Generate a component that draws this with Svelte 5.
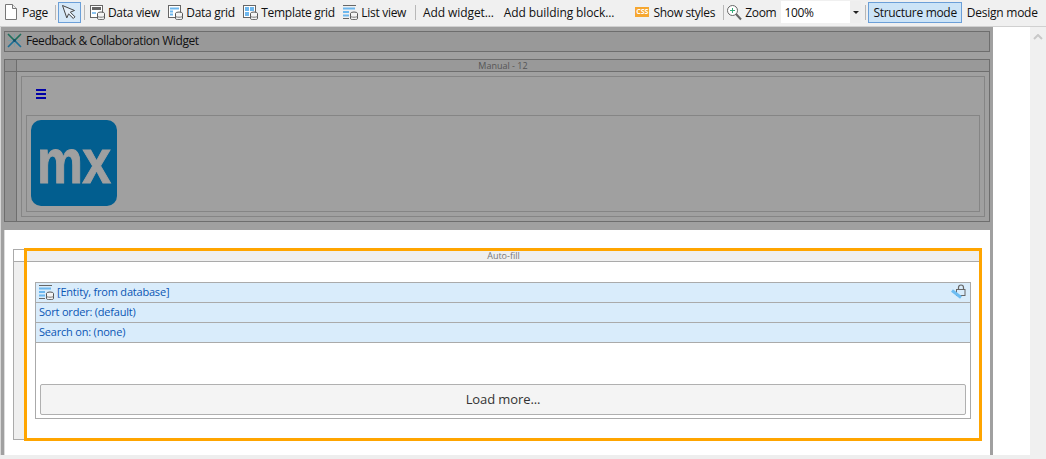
<script lang="ts">
  const gridTools = [
    { label: 'Data view', icon: 'view' },
    { label: 'Data grid', icon: 'grid' },
    { label: 'Template grid', icon: 'template' },
    { label: 'List view', icon: 'list' }
  ]
  const dsRows = ['Sort order: (default)', 'Search on: (none)']
</script>

{#snippet db()}
  <ellipse cx="12" cy="9.5" rx="3.5" ry="1.5" fill="#f4f4f4" stroke="#555" />
  <path d="M8.5 9.5v5c0 .8 1.500 1.200 3.500 1.200s3.500-.4 3.500-1.200v-5" fill="#f4f4f4" stroke="#555" />
  <path d="M8.5 12c0 .8 1.500 1.200 3.500 1.200s3.500-.4 3.500-1.200" fill="none" stroke="#777" />
{/snippet}

<div class="app">
  <header class="toolbar">
    <div class="tool page">
      <svg width="16" height="18" viewBox="0 0 16 18"><path d="M2.500 1.500h7l4 4v11h-11z" fill="#fff" stroke="#777" /><path d="M9.500 1.500v4h4" fill="#eee" stroke="#777" /></svg>
      <span>Page</span>
    </div>
    <i class="sep"></i>
    <div class="select-btn">
      <svg width="18" height="18" viewBox="0 0 18 18"><path d="M2.500 2.500l12 5-4.200 1.700 4.700 4.600-1.700 1.700-4.700-4.600-1.800 4z" fill="#e4eef8" stroke="#444" stroke-linejoin="round" /></svg>
    </div>
    <i class="sep"></i>
    <div class="grid-tools">
      {#each gridTools as t}
        <div class="tool">
          <svg width="16" height="16" viewBox="0 0 16 16">
            {#if t.icon === 'view'}
              <rect x="1.500" y="1.500" width="12" height="12" fill="#fff" stroke="#666" />
              <rect x="3" y="3" width="9" height="3" fill="#666" />
              <rect x="3" y="8" width="4" height="2" fill="#8cc4f0" />
            {:else if t.icon === 'grid'}
              <rect x="1.500" y="1.500" width="12" height="12" fill="#fff" stroke="#666" />
              <path d="M3 4.500h9M3 7.500h3M3 10.500h3" stroke="#6db7ee" stroke-width="2" />
            {:else if t.icon === 'template'}
              <rect x="1.500" y="1.500" width="12" height="12" fill="#fff" stroke="#666" />
              <rect x="3" y="3" width="4" height="4" fill="#6db7ee" />
              <rect x="8" y="3" width="4" height="4" fill="#6db7ee" />
              <rect x="3" y="8" width="4" height="4" fill="#6db7ee" />
            {:else}
              <path d="M1 1.500h13M1 14.500h6" stroke="#666" />
              <path d="M1 4.500h12M1 8h6M1 11.500h6" stroke="#6db7ee" stroke-width="2" />
            {/if}
            {@render db()}
          </svg>
          <span>{t.label}</span>
        </div>
      {/each}
    </div>
    <i class="sep"></i>
    <div class="tool add">Add widget...</div>
    <div class="tool add">Add building block...</div>
    <div class="tool styles">
      <span class="css">CSS</span>
      <span>Show styles</span>
    </div>
    <i class="sep"></i>
    <div class="tool zoom">
      <svg width="16" height="17" viewBox="0 0 16 17"><circle cx="6.500" cy="6.500" r="5" fill="#fff" stroke="#666" /><path d="M10 10l5 5.500" stroke="#666" stroke-width="2" /><path d="M4 6.500h5M6.500 4v5" stroke="#3a7" /></svg>
      <span>Zoom</span>
    </div>
    <div class="combo"><span>100%</span><b><i></i></b></div>
    <i class="sep"></i>
    <div class="mode on">Structure mode</div>
    <div class="mode">Design mode</div>
  </header>

  <div class="main">
    <div class="work">
      <div class="row">
        <div class="canvas">
          <section class="shaded">
            <div class="widget">
              <svg width="15" height="15" viewBox="0 0 15 15">
                <path d="M7.500 1v13M1 7.500h13" stroke="#7d9ea6" />
                <path d="M1 1l6.500 6.500L14 1" fill="none" stroke="#1f6f5c" stroke-width="1.600" />
                <path d="M1 14l6.500-6.500L14 14" fill="none" stroke="#1b6f96" stroke-width="1.600" />
                <circle cx="7.500" cy="7.500" r="1.300" fill="#154a66" />
              </svg>
              <span>Feedback &amp; Collaboration Widget</span>
            </div>
            <div class="layout dark">
              <div class="corner"></div>
              <div class="layout-head">Manual - 12</div>
              <div class="rail"></div>
              <div class="layout-body">
                <div class="nested">
                  <div class="burger"><i></i><i></i><i></i></div>
                  <div class="logo-box">
                    <div class="logo"><span>mx</span></div>
                  </div>
                </div>
              </div>
            </div>
          </section>

          <section class="light">
            <div class="layout pale">
              <div class="corner"></div>
              <div class="layout-head">Auto-fill</div>
              <div class="rail"></div>
              <div class="layout-body">
                <div class="dataview">
                  <div class="ds-row first">
                    <svg width="16" height="16" viewBox="0 0 16 16">
                      <path d="M1 1.500h13M1 14.500h6" stroke="#666" />
                      <path d="M1 4.500h12M1 8h6M1 11.500h6" stroke="#6db7ee" stroke-width="2" />
                      {@render db()}
                    </svg>
                    <span>[Entity, from database]</span>
                    <svg class="lock" width="16" height="16" viewBox="0 0 16 16">
                      <path d="M8.500 5.500V3.500a2.500 2.500 0 0 1 5 0v2" fill="none" stroke="#666" stroke-width="1.200" />
                      <rect x="6.500" y="5.500" width="8.500" height="6" fill="none" stroke="#666" />
                      <path d="M2 6.500l9 7" stroke="#6cbcf2" stroke-width="3" />
                    </svg>
                  </div>
                  {#each dsRows as row}
                    <div class="ds-row">{row}</div>
                  {/each}
                  <div class="ds-content">
                    <button class="load">Load more...</button>
                  </div>
                </div>
              </div>
            </div>
            <div class="highlight"></div>
          </section>
        </div>
        <div class="gutter"></div>
      </div>
      <div class="hbar"></div>
    </div>
    <div class="scroll"><svg width="10" height="6" viewBox="0 0 10 6"><path d="M1 5l4-4 4 4" fill="none" stroke="#c8c8c8" stroke-width="2" /></svg></div>
  </div>
</div>

<style>
  :global(body) {
    background: #fff;
  }
  .app {
    width: 1046px;
    height: 459px;
    display: flex;
    flex-direction: column;
    overflow: hidden;
    font-family: 'Open Sans', 'Noto Sans', sans-serif;
    font-size: 12px;
    letter-spacing: -0.3px;
    color: #111;
  }
  .toolbar {
    height: 27px;
    flex: none;
    box-sizing: border-box;
    border-bottom: 1px solid #d0d0d0;
    background: #f0f0f0;
    display: flex;
    align-items: center;
    padding: 0 0 2px 3px;
    white-space: nowrap;
  }
  .tool {
    display: flex;
    align-items: center;
    gap: 3px;
  }
  .sep {
    width: 1px;
    height: 15px;
    background: #b8b8b8;
    flex: none;
    margin: 0 3px;
  }
  .select-btn {
    width: 23px;
    height: 21px;
    box-sizing: border-box;
    border: 1px solid #6b9fd8;
    background: #d5e8f8;
    display: flex;
    align-items: center;
    justify-content: center;
  }
  .page + .sep {
    margin: 0 2px 0 7px;
  }
  .grid-tools {
    display: flex;
    gap: 7.5px;
    margin-left: 1px;
    margin-right: 6px;
  }
  .add {
    margin-left: 4px;
    letter-spacing: -0.1px;
  }
  .add + .add {
    margin-left: 10px;
  }
  .styles {
    margin-left: 21px;
    gap: 4px;
    margin-right: 5px;
  }
  .css {
    width: 14px;
    height: 10px;
    background: #f6a730;
    color: #fff;
    font-size: 7px;
    font-weight: 700;
    letter-spacing: 0;
    line-height: 10px;
    text-align: center;
  }
  .zoom {
    margin-left: -1px;
  }
  .combo {
    width: 80px;
    height: 22px;
    margin-left: 5px;
    background: #fff;
    display: flex;
    align-items: center;
    justify-content: space-between;
    padding-left: 3px;
    box-sizing: border-box;
  }
  .combo b {
    width: 11px;
    height: 22px;
    background: #eee;
    display: flex;
    align-items: center;
    justify-content: center;
  }
  .combo i {
    border: 3px solid transparent;
    border-top-color: #222;
    border-bottom-width: 0;
  }
  .combo + .sep {
    margin: 0 2px 0 4px;
  }
  .mode {
    height: 21px;
    line-height: 19px;
    box-sizing: border-box;
    border: 1px solid transparent;
    padding: 0 4px;
  }
  .mode.on {
    background: #cce4f7;
    border-color: #6b9fd8;
  }
  .mode + .mode {
    padding: 0 0 0 4px;
    letter-spacing: -0.25px;
  }
  .main {
    flex: 1;
    min-height: 0;
    display: flex;
  }
  .work {
    flex: 1;
    min-width: 0;
    display: flex;
    flex-direction: column;
  }
  .row {
    flex: 1;
    min-height: 0;
    display: flex;
  }
  .hbar {
    height: 4px;
    flex: none;
    background: #eee;
  }
  .canvas {
    width: 993px;
    flex: none;
    display: flex;
    flex-direction: column;
    background: #a0a0a0;
    padding-left: 1px;
    box-sizing: border-box;
    border-left: 1px solid #d8d8d8;
  }
  .shaded {
    height: 203px;
    flex: none;
    box-sizing: border-box;
    padding: 4px 3px 0 3px;
    margin-left: -2px;
  }
  .widget {
    height: 21px;
    box-sizing: border-box;
    border: 1px solid #6e6e6e;
    background: #999;
    display: flex;
    align-items: center;
    gap: 4px;
    padding: 0 0 2px 2px;
    margin-left: 1px;
    letter-spacing: -0.42px;
    color: #111;
  }
  .layout {
    display: grid;
    grid-template-columns: 12px 1fr;
    grid-template-rows: 12px 1fr;
    box-sizing: border-box;
  }
  .layout-head {
    font-size: 9px;
    letter-spacing: 0;
    line-height: 11px;
    text-align: center;
    box-sizing: border-box;
    border-bottom: 1px solid;
  }
  .corner,
  .rail {
    box-sizing: border-box;
    border-right: 1px solid;
  }
  .corner {
    border-bottom: 1px solid;
  }
  .dark {
    height: 163px;
    margin: 7px 0 0 1px;
    border: 1px solid #6e6e6e;
    background: #999;
  }
  .dark .layout-head {
    color: #555;
    border-color: #6e6e6e;
  }
  .dark .corner,
  .dark .rail {
    border-color: #6e6e6e;
    background: #929292;
  }
  .dark .layout-body {
    padding: 4px 4px 4px 4px;
    background: #a0a0a0;
  }
  .nested {
    height: 100%;
    box-sizing: border-box;
    border: 1px solid #858585;
    padding: 12px 4px 4px 4px;
  }
  .burger {
    margin-left: 10px;
    width: 10px;
    height: 10px;
    display: flex;
    flex-direction: column;
    justify-content: space-between;
  }
  .burger i {
    height: 2px;
    background: #0000a8;
  }
  .logo-box {
    margin-top: 16px;
    height: 97px;
    box-sizing: border-box;
    border: 1px solid #858585;
    padding: 4px;
  }
  .logo {
    width: 86px;
    height: 86px;
    border-radius: 10px;
    background: #025e8f;
    color: #a0a0a0;
    font-family: 'Liberation Sans', sans-serif;
    font-weight: 700;
    font-size: 63px;
    letter-spacing: -1px;
    line-height: 82px;
    text-align: center;
    overflow: hidden;
  }
  .logo span {
    display: inline-block;
    transform: scaleX(0.82);
    margin: 0 -10px;
    -webkit-text-stroke: 1px #a0a0a0;
  }
  .light {
    position: relative;
    flex: 1;
    min-height: 0;
    margin: 0 3px 0 2px;
    background: #fff;
    box-sizing: border-box;
    padding: 19px 11px 0 8px;
    border-left: 1px solid #ddd;
  }
  .pale {
    height: 191px;
    border: 1px solid #aaa;
    border-right: none;
    border-bottom: none;
    margin-right: -2px;
  }
  .pale .layout-head {
    color: #777;
    background: #efefef;
    border-color: #aaa;
  }
  .pale .corner,
  .pale .rail {
    background: #efefef;
    border-color: #efefef;
  }
  .pale .corner {
    background: #fff;
    border-bottom-color: #aaa;
  }
  .pale .rail {
    border-bottom: 1px solid #aaa;
  }
  .pale .layout-body {
    padding: 20px 10px 0 9px;
  }
  .dataview {
    height: 137px;
    box-sizing: border-box;
    border: 1px solid #aaa;
    color: #0a56b4;
    font-size: 11px;
    letter-spacing: -0.2px;
  }
  .ds-row {
    height: 20px;
    box-sizing: border-box;
    border-bottom: 1px solid #aaa;
    background: #d9ecfb;
    padding: 0 0 2px 3px;
    display: flex;
    align-items: center;
  }
  .ds-row.first {
    padding-left: 2px;
    gap: 3px;
  }
  .lock {
    margin-left: auto;
    margin-right: 4px;
  }
  .ds-content {
    padding: 41px 4px 0 4px;
  }
  .load {
    display: block;
    width: 100%;
    height: 31px;
    box-sizing: border-box;
    border: 1px solid #b0b0b0;
    border-radius: 2px;
    background: #f4f4f4;
    color: #333;
    font: inherit;
    font-size: 13px;
    letter-spacing: -0.1px;
    padding: 0 0 2px;
  }
  .highlight {
    position: absolute;
    left: 19px;
    top: 18px;
    width: 958px;
    height: 193px;
    box-sizing: border-box;
    border: 3px solid #ffa500;
    pointer-events: none;
  }
  .gutter {
    flex: 1;
    background: #fff;
  }
  .scroll {
    width: 16px;
    flex: none;
    background: #f0f0f0;
    display: flex;
    justify-content: center;
    padding-top: 7px;
    box-sizing: border-box;
  }
  .scroll svg {
    display: block;
  }
</style>
